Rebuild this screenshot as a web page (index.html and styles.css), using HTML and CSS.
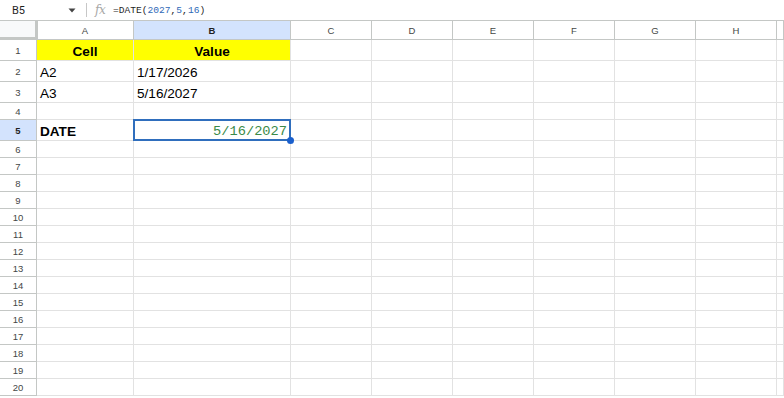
FILE: index.html
```html
<!DOCTYPE html>
<html>
<head>
<meta charset="utf-8">
<link rel="stylesheet" href="styles.css">
</head>
<body>
<div class="toolbar">
  <div class="namebox">B5</div>
  <svg class="dd" width="8" height="5" viewBox="0 0 8 5"><path d="M0.5 0.5h7L4 4.5z" fill="#444"/></svg>
  <div class="sep"></div>
  <div class="fx">fx</div>
  <div class="formula">=DATE(<span class="num">2027</span>,<span class="num">5</span>,<span class="num">16</span>)</div>
</div>
<div class="sheet">
  <div class="row hdr">
    <div class="corner"></div><div class="ch">A</div><div class="ch sel">B</div><div class="ch">C</div><div class="ch">D</div><div class="ch">E</div><div class="ch">F</div><div class="ch">G</div><div class="ch">H</div><div class="ch"></div>
  </div>
  <div class="row r21">
    <div class="rh">1</div><div class="c yel bold center">Cell</div><div class="c yel bold center">Value</div><div class="c"></div><div class="c"></div><div class="c"></div><div class="c"></div><div class="c"></div><div class="c"></div><div class="c"></div>
  </div>
  <div class="row r21">
    <div class="rh">2</div><div class="c">A2</div><div class="c">1/17/2026</div><div class="c"></div><div class="c"></div><div class="c"></div><div class="c"></div><div class="c"></div><div class="c"></div><div class="c"></div>
  </div>
  <div class="row r21">
    <div class="rh">3</div><div class="c">A3</div><div class="c">5/16/2027</div><div class="c"></div><div class="c"></div><div class="c"></div><div class="c"></div><div class="c"></div><div class="c"></div><div class="c"></div>
  </div>
  <div class="row">
    <div class="rh">4</div><div class="c"></div><div class="c"></div><div class="c"></div><div class="c"></div><div class="c"></div><div class="c"></div><div class="c"></div><div class="c"></div><div class="c"></div>
  </div>
  <div class="row r21">
    <div class="rh sel">5</div><div class="c bold">DATE</div><div class="c active">5/16/2027</div><div class="c"></div><div class="c"></div><div class="c"></div><div class="c"></div><div class="c"></div><div class="c"></div><div class="c"></div>
  </div>
  <div class="row"><div class="rh">6</div><div class="c"></div><div class="c"></div><div class="c"></div><div class="c"></div><div class="c"></div><div class="c"></div><div class="c"></div><div class="c"></div><div class="c"></div></div>
  <div class="row"><div class="rh">7</div><div class="c"></div><div class="c"></div><div class="c"></div><div class="c"></div><div class="c"></div><div class="c"></div><div class="c"></div><div class="c"></div><div class="c"></div></div>
  <div class="row"><div class="rh">8</div><div class="c"></div><div class="c"></div><div class="c"></div><div class="c"></div><div class="c"></div><div class="c"></div><div class="c"></div><div class="c"></div><div class="c"></div></div>
  <div class="row"><div class="rh">9</div><div class="c"></div><div class="c"></div><div class="c"></div><div class="c"></div><div class="c"></div><div class="c"></div><div class="c"></div><div class="c"></div><div class="c"></div></div>
  <div class="row"><div class="rh">10</div><div class="c"></div><div class="c"></div><div class="c"></div><div class="c"></div><div class="c"></div><div class="c"></div><div class="c"></div><div class="c"></div><div class="c"></div></div>
  <div class="row"><div class="rh">11</div><div class="c"></div><div class="c"></div><div class="c"></div><div class="c"></div><div class="c"></div><div class="c"></div><div class="c"></div><div class="c"></div><div class="c"></div></div>
  <div class="row"><div class="rh">12</div><div class="c"></div><div class="c"></div><div class="c"></div><div class="c"></div><div class="c"></div><div class="c"></div><div class="c"></div><div class="c"></div><div class="c"></div></div>
  <div class="row"><div class="rh">13</div><div class="c"></div><div class="c"></div><div class="c"></div><div class="c"></div><div class="c"></div><div class="c"></div><div class="c"></div><div class="c"></div><div class="c"></div></div>
  <div class="row"><div class="rh">14</div><div class="c"></div><div class="c"></div><div class="c"></div><div class="c"></div><div class="c"></div><div class="c"></div><div class="c"></div><div class="c"></div><div class="c"></div></div>
  <div class="row"><div class="rh">15</div><div class="c"></div><div class="c"></div><div class="c"></div><div class="c"></div><div class="c"></div><div class="c"></div><div class="c"></div><div class="c"></div><div class="c"></div></div>
  <div class="row"><div class="rh">16</div><div class="c"></div><div class="c"></div><div class="c"></div><div class="c"></div><div class="c"></div><div class="c"></div><div class="c"></div><div class="c"></div><div class="c"></div></div>
  <div class="row"><div class="rh">17</div><div class="c"></div><div class="c"></div><div class="c"></div><div class="c"></div><div class="c"></div><div class="c"></div><div class="c"></div><div class="c"></div><div class="c"></div></div>
  <div class="row"><div class="rh">18</div><div class="c"></div><div class="c"></div><div class="c"></div><div class="c"></div><div class="c"></div><div class="c"></div><div class="c"></div><div class="c"></div><div class="c"></div></div>
  <div class="row"><div class="rh">19</div><div class="c"></div><div class="c"></div><div class="c"></div><div class="c"></div><div class="c"></div><div class="c"></div><div class="c"></div><div class="c"></div><div class="c"></div></div>
  <div class="row"><div class="rh">20</div><div class="c"></div><div class="c"></div><div class="c"></div><div class="c"></div><div class="c"></div><div class="c"></div><div class="c"></div><div class="c"></div><div class="c"></div></div>
</div>
</body>
</html>
```
FILE: styles.css
```css
html, body {
  margin: 0;
  padding: 0;
  background: #fff;
  overflow: hidden;
  width: 784px;
  height: 398px;
}
body {
  font-family: "Liberation Sans", Arial, sans-serif;
  color: #000;
}
.toolbar {
  height: 21px;
  display: flex;
  align-items: center;
  box-sizing: border-box;
  border-bottom: 1px solid #c4c7c5;
  font-size: 11px;
  color: #202124;
}
.namebox {
  width: 60px;
  padding-left: 12px;
  box-sizing: border-box;
  font-family: "Roboto", "Liberation Sans", sans-serif;
  font-size: 11px;
  color: #1f1f1f;
}
.dd {
  margin-left: 8px;
  margin-top: 1px;
}
.sep {
  width: 1px;
  height: 14px;
  background: #c7c7c7;
  margin-left: 10px;
}
.fx {
  margin-left: 8px;
  font-family: "DejaVu Serif", "Liberation Serif", serif;
  font-style: italic;
  font-size: 12px;
  color: #a8a8a8;
  letter-spacing: -0.5px;
  width: 14px;
}
.formula {
  margin-left: 4px;
  font-family: "Liberation Mono", "DejaVu Sans Mono", monospace;
  font-size: 9.6px;
  color: #1f1f1f;
}
.formula .num {
  color: #2f6ab8;
}
.row {
  display: grid;
  grid-template-columns: 37px 97px 157px 81px 81px 81px 81px 81px 81px 7px;
  height: 17px;
}
.row.r21 {
  height: 21px;
}
.row.hdr {
  height: 19px;
}
.corner {
  background: #f8f9fa;
  border-right: 3px solid #c4c7c5;
  border-bottom: 3px solid #c4c7c5;
  box-sizing: border-box;
  margin-right: -1px;
}
.ch {
  box-sizing: border-box;
  border-right: 1px solid #c4c7c5;
  border-bottom: 1px solid #c4c7c5;
  font-size: 9.5px;
  color: #444746;
  display: flex;
  align-items: center;
  justify-content: center;
  padding-top: 1px;
}
.ch.sel, .rh.sel {
  background: #d3e3fd;
  color: #1f1f1f;
  font-weight: bold;
}
.rh {
  box-sizing: border-box;
  border-right: 1px solid #c4c7c5;
  border-bottom: 1px solid #c4c7c5;
  font-size: 9.5px;
  color: #444746;
  display: flex;
  align-items: center;
  justify-content: center;
}
.c {
  box-sizing: border-box;
  border-right: 1px solid #e2e2e2;
  border-bottom: 1px solid #e2e2e2;
  font-size: 13.6px;
  display: flex;
  align-items: center;
  padding: 2px 3px 0 3px;
  white-space: nowrap;
  overflow: visible;
}
.yel {
  background: #ffff00;
}
.bold {
  font-weight: bold;
}
.center {
  justify-content: center;
}
.active {
  position: relative;
  justify-content: flex-end;
  font-family: "Liberation Mono", "DejaVu Sans Mono", monospace;
  font-size: 13.7px;
  color: #3a8a48;
  padding-right: 3px;
}
.active::after {
  content: "";
  position: absolute;
  left: -1px;
  top: -1px;
  right: -1px;
  bottom: -1px;
  border: 2px solid #2f6ebd;
  pointer-events: none;
}
.active::before {
  content: "";
  position: absolute;
  right: -4px;
  bottom: -4px;
  width: 7px;
  height: 7px;
  border-radius: 50%;
  background: #1a5fcc;
  z-index: 2;
}
```
